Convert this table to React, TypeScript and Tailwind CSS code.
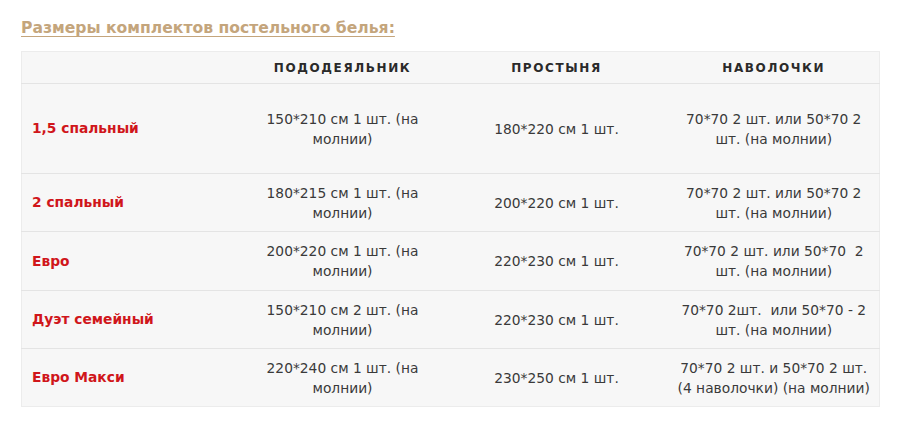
import React from "react";

const rows = [
  { name: "1,5 спальный", a: "150*210 см 1 шт. (на молнии)", b: "180*220 см 1 шт.", c: "70*70 2 шт. или 50*70 2 шт. (на молнии)", h: "h-[90px]" },
  { name: "2 спальный", a: "180*215 см 1 шт. (на молнии)", b: "200*220 см 1 шт.", c: "70*70 2 шт. или 50*70 2 шт. (на молнии)", h: "h-[58px]" },
  { name: "Евро", a: "200*220 см 1 шт. (на молнии)", b: "220*230 см 1 шт.", c: "70*70 2 шт. или 50*70\u00a0 2 шт. (на молнии)", h: "h-[59px]" },
  { name: "Дуэт семейный", a: "150*210 см 2 шт. (на молнии)", b: "220*230 см 1 шт.", c: "70*70 2шт.\u00a0 или 50*70 - 2 шт. (на молнии)", h: "h-[58px]" },
  { name: "Евро Макси", a: "220*240 см 1 шт. (на молнии)", b: "230*250 см 1 шт.", c: "70*70 2 шт. и 50*70 2 шт. (4 наволочки) (на молнии)", h: "h-[58px]" },
];

export default function App() {
  return (
    <div className="w-[900px] h-[425px] bg-white px-[21px] pt-[16px]" style={{ fontFamily: '"DejaVu Sans", Verdana, sans-serif' }}>
      <div className="text-[15.6px] font-bold leading-[24px] text-[#c4a57c] underline underline-offset-[3px]">
        Размеры комплектов постельного белья:
      </div>
      <table className="mt-[11px] w-[858px] border-collapse table-fixed bg-[#f7f7f7] border border-[#ececec]">
        <colgroup>
          <col className="w-[219px]" />
          <col className="w-[204px]" />
          <col className="w-[224px]" />
          <col className="w-[211px]" />
        </colgroup>
        <thead>
          <tr className="h-[32px] border-b border-[#e4e4e4]">
            <th></th>
            <th className="text-[12px] font-bold tracking-[1.6px] text-[#2a2a2a] text-center">ПОДОДЕЯЛЬНИК</th>
            <th className="text-[12px] font-bold tracking-[1.6px] text-[#2a2a2a] text-center">ПРОСТЫНЯ</th>
            <th className="text-[12px] font-bold tracking-[1.6px] text-[#2a2a2a] text-center">НАВОЛОЧКИ</th>
          </tr>
        </thead>
        <tbody>
          {rows.map((r, i) => (
            <tr key={i} className={`${r.h} ${i < rows.length - 1 ? "border-b border-[#e4e4e4]" : ""}`}>
              <td className="pl-[10px] text-[13.8px] font-bold text-[#d0161b]">{r.name}</td>
              <td className="px-[18px] text-center text-[13.8px] leading-[20px] text-[#3a3a3a]">{r.a}</td>
              <td className="px-[10px] text-center text-[13.8px] leading-[20px] text-[#3a3a3a]">{r.b}</td>
              <td className="px-[5px] text-center text-[13.8px] leading-[20px] text-[#3a3a3a]">{r.c}</td>
            </tr>
          ))}
        </tbody>
      </table>
    </div>
  );
}
